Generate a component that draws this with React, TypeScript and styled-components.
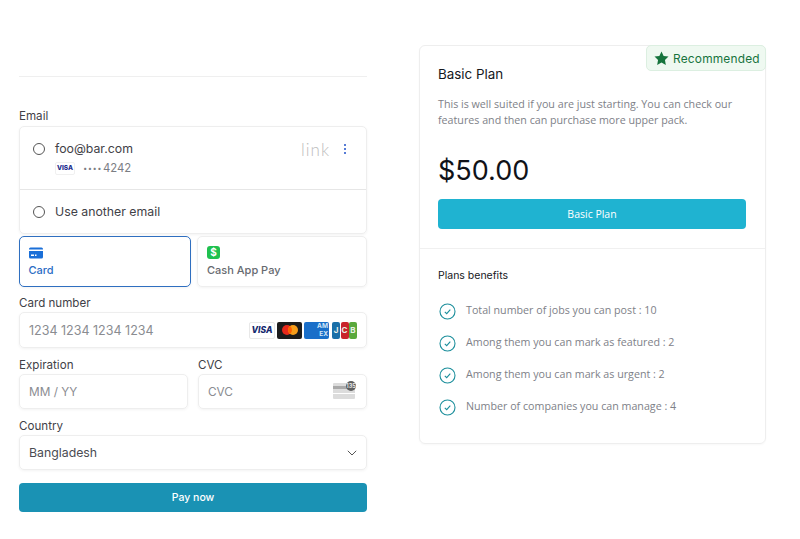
import React from "react";
import styled, { createGlobalStyle } from "styled-components";

const benefits = [
  "Total number of jobs you can post : 10",
  "Among them you can mark as featured : 2",
  "Among them you can mark as urgent : 2",
  "Number of companies you can manage : 4",
];

const App = () => {
  return (
    <Page>
      <GlobalStyle />
      <CheckoutColumn>
        <TopRule />
        <Label $top={30}>Email</Label>
        <EmailBox>
          <LinkRow>
            <Radio />
            <LinkInfo>
              <EmailText>foo@bar.com</EmailText>
              <SavedCard>
                <MiniVisa>VISA</MiniVisa>
                <Dots>····</Dots>
                <span>4242</span>
              </SavedCard>
            </LinkInfo>
            <LinkLogo>link</LinkLogo>
            <Kebab>
              <i />
              <i />
              <i />
            </Kebab>
          </LinkRow>
          <OtherRow>
            <Radio />
            <EmailText>Use another email</EmailText>
          </OtherRow>
        </EmailBox>
        <Tabs>
          <Tab $active>
            <svg width="14" height="12" viewBox="0 0 14 12">
              <path d="M0 2a1.500 1.500 0 0 1 1.500-1.500h11A1.500 1.500 0 0 1 14 2v.6H0z" fill="#1a6fd8" />
              <path d="M0 4h14v6a1.500 1.500 0 0 1-1.500 1.500h-11A1.500 1.500 0 0 1 0 10z" fill="#1a6fd8" />
              <rect x="2" y="7.500" width="3" height="1.500" fill="#fff" />
              <rect x="6" y="7.500" width="1.500" height="1.500" fill="#fff" />
            </svg>
            <TabName $active>Card</TabName>
          </Tab>
          <Tab>
            <CashIcon>$</CashIcon>
            <TabName>Cash App Pay</TabName>
          </Tab>
        </Tabs>
        <Label $top={7}>Card number</Label>
        <Field>
          <Placeholder>1234 1234 1234 1234</Placeholder>
          <Brands>
            <VisaMark>VISA</VisaMark>
            <MasterMark>
              <svg width="24" height="16" viewBox="0 0 24 16">
                <circle cx="9" cy="8" r="5" fill="#e8291c" />
                <circle cx="15" cy="8" r="5" fill="#f79e1b" />
                <path d="M12 4a5 5 0 0 1 0 8a5 5 0 0 1 0-8z" fill="#ff5f00" />
              </svg>
            </MasterMark>
            <AmexMark>
              <span>AM</span>
              <span>EX</span>
            </AmexMark>
            <JcbMark>
              <JcbBar $color="#1a6fa8">J</JcbBar>
              <JcbBar $color="#c9252c">C</JcbBar>
              <JcbBar $color="#5aa83c">B</JcbBar>
            </JcbMark>
          </Brands>
        </Field>
        <SplitRow>
          <SplitCell>
            <Label $top={0}>Expiration</Label>
            <Field $short>
              <Placeholder $small>MM / YY</Placeholder>
            </Field>
          </SplitCell>
          <SplitCell>
            <Label $top={0}>CVC</Label>
            <Field $short>
              <Placeholder $small>CVC</Placeholder>
              <CvcIcon>
                <svg width="24" height="18" viewBox="0 0 24 18">
                  <rect x="0" y="2" width="22" height="16" rx="1" fill="#dcdcdc" />
                  <rect x="0" y="5" width="22" height="3" fill="#a9a9a9" />
                  <rect x="0" y="12" width="22" height="1" fill="#fff" />
                  <circle cx="18" cy="5" r="5" fill="#5f5f5f" />
                  <text x="18" y="7" fontSize="5.500" fontWeight="700" fontFamily="Inter, sans-serif" fill="#e8e8e8" textAnchor="middle">135</text>
                </svg>
              </CvcIcon>
            </Field>
          </SplitCell>
        </SplitRow>
        <Label $top={8}>Country</Label>
        <Field $short>
          <CountryText>Bangladesh</CountryText>
          <Chevron viewBox="0 0 10 6" width="10" height="6">
            <path d="M.8.800 5 5l4.200-4.200" fill="none" stroke="#555" strokeWidth="1" />
          </Chevron>
        </Field>
        <PayButton>Pay now</PayButton>
      </CheckoutColumn>

      <PlanCard>
        <Badge>
          <svg width="15" height="14" viewBox="0 0 24 23">
            <path d="M12 .8l3.500 7.300 8 1.100-5.800 5.600 1.400 8L12 19l-7.100 3.800 1.400-8L.5 9.200l8-1.100z" fill="#17743d" />
          </svg>
          Recommended
        </Badge>
        <PlanTop>
          <PlanTitle>Basic Plan</PlanTitle>
          <PlanDesc>
            This is well suited if you are just starting. You can check our features and then can purchase more upper pack.
          </PlanDesc>
          <Price>$50.00</Price>
          <PlanButton>Basic Plan</PlanButton>
        </PlanTop>
        <PlanBottom>
          <BenefitsTitle>Plans benefits</BenefitsTitle>
          <BenefitList>
            {benefits.map((b) => (
              <Benefit key={b}>
                <svg width="17" height="17" viewBox="0 0 17 17">
                  <circle cx="8.500" cy="8.500" r="7.500" fill="none" stroke="#1d8f9c" strokeWidth="1.100" />
                  <path d="M5.800 8.800l1.900 1.900 3.600-4" fill="none" stroke="#1d8f9c" strokeWidth="1.100" />
                </svg>
                <BenefitText>{b}</BenefitText>
              </Benefit>
            ))}
          </BenefitList>
        </PlanBottom>
      </PlanCard>
    </Page>
  );
};

export default App;

const GlobalStyle = createGlobalStyle`
  html, body {
    margin: 0;
    background: #fff;
  }
  * {
    box-sizing: border-box;
  }
`;

const Page = styled.div`
  width: 800px;
  height: 539px;
  overflow: hidden;
  display: flex;
  align-items: flex-start;
  padding-left: 19px;
  gap: 52px;
  font-family: Inter, "Liberation Sans", sans-serif;
`;

const CheckoutColumn = styled.div`
  width: 348px;
  padding-top: 76px;
  display: flex;
  flex-direction: column;
`;

const TopRule = styled.div`
  height: 1px;
  background: #efefef;
`;

const Label = styled.div<{ $top: number }>`
  margin-top: ${(p) => p.$top}px;
  height: 18px;
  line-height: 18px;
  font-size: 11.600px;
  color: #3f4147;
`;

const EmailBox = styled.div`
  height: 108px;
  margin-top: 1px;
  border-radius: 5px;
  border: 1px solid #eeeeee;
  box-shadow: 0 1px 3px rgba(0, 0, 0, 0.05);
  display: flex;
  flex-direction: column;
`;

const LinkRow = styled.div`
  height: 63px;
  border-bottom: 1px solid #e6e6e6;
  display: flex;
  align-items: flex-start;
  padding: 13px 15px 0 13px;
`;

const OtherRow = styled.div`
  flex: 1;
  display: flex;
  align-items: center;
  padding-left: 13px;
`;

const Radio = styled.div`
  flex: none;
  width: 12px;
  height: 12px;
  margin-top: 3px;
  margin-right: 10px;
  border: 1.300px solid #555;
  border-radius: 50%;
  ${OtherRow} & {
    margin-top: 0;
  }
`;

const LinkInfo = styled.div`
  flex: 1;
  display: flex;
  flex-direction: column;
  gap: 3px;
`;

const EmailText = styled.div`
  font-size: 12.300px;
  line-height: 17px;
  color: #3f4147;
`;

const SavedCard = styled.div`
  display: flex;
  align-items: center;
  gap: 8px;
  font-size: 11.300px;
  color: #7b7d83;
`;

const Dots = styled.span`
  font-size: 13px;
  font-weight: 700;
  letter-spacing: 0.4px;
  margin-right: -7px;
`;

const MiniVisa = styled.div`
  width: 20px;
  height: 13px;
  border-radius: 2px;
  border: 1px solid #f0f0f0;
  font-size: 6.500px;
  font-weight: 800;
  color: #1a2a8c;
  text-align: center;
  line-height: 11px;
`;

const LinkLogo = styled.div`
  font-family: Lato, sans-serif;
  font-size: 17px;
  font-weight: 300;
  letter-spacing: 1px;
  line-height: 19px;
  color: #bdbdbd;
  margin-right: 14px;
`;

const Kebab = styled.div`
  display: flex;
  flex-direction: column;
  gap: 2px;
  padding-top: 4px;
  padding-right: 5px;
  i {
    display: block;
    width: 2px;
    height: 2px;
    border-radius: 50%;
    background: #1f50c8;
  }
`;

const Tabs = styled.div`
  margin-top: 2px;
  display: flex;
  gap: 6px;
`;

const Tab = styled.div<{ $active?: boolean }>`
  width: ${(p) => (p.$active ? 172 : 170)}px;
  height: 51px;
  border-radius: 5px;
  border: ${(p) => (p.$active ? "1.500px solid #2f6fc0" : "1px solid #eeeeee")};
  box-shadow: 0 1px 3px rgba(0, 0, 0, 0.05);
  display: flex;
  flex-direction: column;
  justify-content: space-between;
  align-items: flex-start;
  padding: 10px 0 9px ${(p) => (p.$active ? 8.5 : 9)}px;
`;

const TabName = styled.div<{ $active?: boolean }>`
  font-size: 11px;
  font-weight: 500;
  line-height: 14px;
  color: ${(p) => (p.$active ? "#2b6cc4" : "#666a70")};
`;

const CashIcon = styled.div`
  width: 13px;
  height: 13px;
  margin-top: -1px;
  border-radius: 3px;
  background: #1fc14f;
  color: #fff;
  font-size: 10px;
  font-weight: 700;
  line-height: 13px;
  text-align: center;
`;

const Field = styled.div<{ $short?: boolean }>`
  height: ${(p) => (p.$short ? 35 : 36)}px;
  border-radius: 5px;
  border: 1px solid #eeeeee;
  box-shadow: 0 1px 3px rgba(0, 0, 0, 0.05);
  display: flex;
  align-items: center;
  justify-content: space-between;
  padding: 0 9px;
`;

const Placeholder = styled.div<{ $small?: boolean }>`
  font-size: ${(p) => (p.$small ? 11.8 : 12.5)}px;
  color: #8a8c91;
`;

const CountryText = styled.div`
  font-size: 12.300px;
  color: #4a4c52;
`;

const Brands = styled.div`
  display: flex;
  align-items: center;
  gap: 2px;
`;

const VisaMark = styled.div`
  width: 26px;
  height: 17px;
  border: 1px solid #e8e8e8;
  border-radius: 2px;
  font-size: 8.500px;
  font-weight: 800;
  font-style: italic;
  line-height: 15px;
  text-align: center;
  color: #14286e;
`;

const MasterMark = styled.div`
  width: 25px;
  height: 17px;
  border-radius: 2px;
  background: #1c1c1c;
  display: flex;
  align-items: center;
  justify-content: center;
  svg {
    display: block;
  }
`;

const AmexMark = styled.div`
  width: 25px;
  height: 17px;
  border-radius: 2px;
  background: #1a6fc9;
  display: flex;
  flex-direction: column;
  align-items: flex-end;
  padding-right: 1px;
  font-size: 6.500px;
  font-weight: 700;
  line-height: 8px;
  color: #d4e6f7;
`;

const JcbMark = styled.div`
  margin-left: 1px;
  display: flex;
  gap: 0.5px;
`;

const JcbBar = styled.div<{ $color: string }>`
  width: 8px;
  height: 17px;
  border-radius: 2px;
  background: ${(p) => p.$color};
  color: #e8f0e8;
  font-size: 8px;
  font-weight: 700;
  line-height: 17px;
  text-align: center;
`;

const SplitRow = styled.div`
  margin-top: 8px;
  display: flex;
  gap: 10px;
`;

const SplitCell = styled.div`
  flex: 1;
`;

const CvcIcon = styled.div`
  display: flex;
  margin-top: -3px;
`;

const Chevron = styled.svg`
  display: block;
`;

const PayButton = styled.button`
  margin-top: 13px;
  height: 29px;
  border: none;
  border-radius: 4px;
  background: #1a92b4;
  color: #fff;
  font-family: inherit;
  font-size: 10.500px;
  font-weight: 500;
`;

const PlanCard = styled.div`
  position: relative;
  width: 347px;
  height: 399px;
  margin-top: 45px;
  border: 1px solid #eeeeee;
  border-radius: 6px;
  box-shadow: 0 1px 2px rgba(0, 0, 0, 0.03);
  font-family: "Open Sans", Inter, sans-serif;
`;

const Badge = styled.div`
  position: absolute;
  top: -1px;
  right: -1px;
  width: 120px;
  height: 26px;
  display: flex;
  align-items: center;
  gap: 4px;
  padding-left: 7px;
  border: 1px solid #dcefe1;
  border-radius: 5px;
  background: #eff9f1;
  font-family: Inter, sans-serif;
  font-size: 11.900px;
  color: #17743d;
  letter-spacing: 0.2px;
`;

const PlanTop = styled.div`
  padding: 20px 18px 19px 18px;
  height: 203px;
  border-bottom: 1px solid #f0f0f0;
  display: flex;
  flex-direction: column;
`;

const PlanTitle = styled.div`
  font-family: Inter, sans-serif;
  font-size: 13.400px;
  line-height: 17px;
  color: #15171c;
`;

const PlanDesc = styled.p`
  margin: 13px 0 0;
  font-size: 10.700px;
  line-height: 16px;
  color: #7e8188;
`;

const Price = styled.div`
  margin-top: 25px;
  font-family: Inter, sans-serif;
  font-size: 27px;
  line-height: 36px;
  color: #101218;
`;

const PlanButton = styled.button`
  margin-top: 10px;
  flex: none;
  height: 30px;
  width: 308px;
  border: none;
  border-radius: 4px;
  background: #1fb3d1;
  color: #fff;
  font-family: inherit;
  font-size: 10.500px;
  font-weight: 500;
`;

const PlanBottom = styled.div`
  padding: 20px 18px 0;
`;

const BenefitsTitle = styled.div`
  font-family: Inter, sans-serif;
  font-size: 10.500px;
  line-height: 13px;
  color: #15171c;
`;

const BenefitList = styled.div`
  margin-top: 20px;
  display: flex;
  flex-direction: column;
  gap: 15px;
`;

const Benefit = styled.div`
  height: 17px;
  display: flex;
  align-items: center;
  gap: 10px;
  padding-left: 1px;
  svg {
    flex: none;
    margin-top: 2px;
  }
`;

const BenefitText = styled.div`
  font-size: 10.700px;
  line-height: 14px;
  margin-top: -2px;
  color: #7e8188;
`;
